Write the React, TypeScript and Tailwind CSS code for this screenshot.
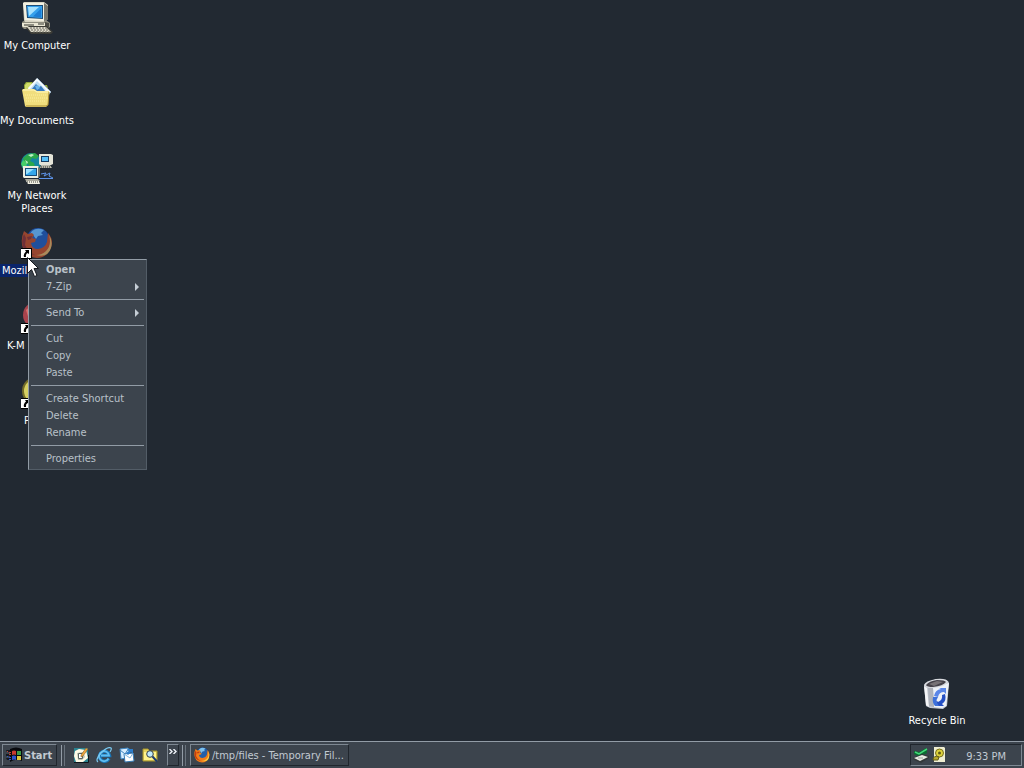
import type { ReactNode } from "react";

function ComputerIcon() {
  return (
    <svg viewBox="0 0 32 32" className="size-8 shrink-0" aria-hidden="true">
      <path d="M1 20l3-2h21l4 3v4l-3 2H3l-2-2z" fill="#8f8e80" />
      <path d="M1 21h23v4H2l-1-1z" fill="#e9e6d3" />
      <path d="M3 23h10M17 22h6" stroke="#33342f" />
      <path d="M24 20l4 1v4l-4 2z" fill="#4b4b44" />
      <path d="M2 1l1-1h20l4 3v14l-4 3H4l-1-2z" fill="#d8d5c4" />
      <path d="M23 1l4 3v13l-4 3z" fill="#77766b" />
      <path d="M2 1l21 0v18L4 18z" fill="#f3f1e2" />
      <path d="M5 3l17 0v14L6 16z" fill="#1b4c77" />
      <path d="M6 4l15 0v12L7 15z" fill="#35a0ec" />
      <path d="M7 5l11 0L8 14z" fill="#a5e1ff" />
      <path d="M12 14.500l8-8v9z" fill="#1c7dd4" />
      <path d="M5 26l3-2h18l6 6-2 2H10z" fill="#3c3c36" />
      <path d="M6 25h19l5 5H10z" fill="#dcd9ca" />
      <path d="M9 26h17M10 28h18M12 30h17" stroke="#6a695f" strokeDasharray="2 1" />
    </svg>
  );
}

function DocumentsIcon() {
  return (
    <svg viewBox="0 0 32 32" className="size-8 shrink-0" aria-hidden="true">
      <path d="M3 8l2-3h6l3 3h12l1 3v16H4z" fill="#94a83a" />
      <path d="M4 8l2-2h4l3 3v4H4z" fill="#cfdc68" />
      <path d="M7 11L16 1l14 14-3 4H9z" fill="#f7fbff" />
      <path d="M16 1l14 14-2 2" fill="none" stroke="#9fb5c9" />
      <path d="M9 12l7-8 9 9-3 3H12z" fill="#bcdcf3" />
      <path d="M11 12l4-5 3 3 2-1 4 5-4 2h-7z" fill="#3577bd" />
      <path d="M14 9l3-1 2 3-3 2z" fill="#6bb5ea" />
      <path d="M1 13l1-1h11l3 2h12l-1 14-2 2H5l-1-1z" fill="#f0de7d" />
      <path d="M2 13h11l3 2h11" fill="none" stroke="#fff8c0" />
      <path d="M28 15l-1 13-2 1H5" fill="none" stroke="#a98d32" />
      <path d="M4 18h22M5 21h21M5 24h20" stroke="#fbeea0" strokeDasharray="1 1" />
    </svg>
  );
}

function NetworkIcon() {
  return (
    <svg viewBox="0 0 32 32" className="size-8 shrink-0" aria-hidden="true">
      <circle cx="10" cy="11" r="10" fill="#1685a0" />
      <path d="M2 6l5-4 7-1 4 3-3 3-4-1-2 3 4 2 1 4-3 5-3-3v-4l-5-3z" fill="#2ca84a" />
      <path d="M2 8l4 3-1 6-3-1-2-4z" fill="#45cf68" />
      <path d="M7 3l4-1 2 1-3 2zM4 8l3 2-1 2z" fill="#c1f3c7" />
      <path d="M18 2h12l2 1v9l-2 1H19l-1-1z" fill="#e4e4d8" />
      <path d="M20 4h8v6h-8z" fill="#153b61" />
      <path d="M21 5h6v4h-6z" fill="#55bdf5" />
      <path d="M20 13h9l2 3H19z" fill="#bab9ac" />
      <path d="M20 15h10" stroke="#33352f" strokeDasharray="1 1" />
      <path d="M18 26.500h14M20 22l5-1-2 3 6-3-1 3 4 2" fill="none" stroke="#5d93e8" />
      <path d="M2 14h15l1 1v10l-1 1H3l-1-1z" fill="#efeee1" />
      <path d="M17 15l2 1v8l-2 2z" fill="#73736a" />
      <path d="M4 16h12v8H4z" fill="#154d7c" />
      <path d="M5 17h10v6H5z" fill="#36a7eb" />
      <path d="M5 17h8l-7 5H5z" fill="#9be1ff" />
      <path d="M4 27h13l2 2H5z" fill="#a8a79b" />
      <path d="M5 29h13l1 3H7z" fill="#f0eee2" />
      <path d="M6 30h12" stroke="#3e3f39" strokeDasharray="1 1" />
    </svg>
  );
}

function FoxGlobe({ className, dim = false }: { className: string; dim?: boolean }) {
  const c = dim
    ? { blue: "#204f9c", sky: "#5796d0", dark: "#162c63", fox: "#96452f", deep: "#6f3038", tail: "#a98a5c" }
    : { blue: "#245fa8", sky: "#7cc0ec", dark: "#173a7c", fox: "#f07c18", deep: "#c53c10", tail: "#ffc93c" };
  return (
    <svg viewBox="0 0 32 32" className={className} aria-hidden="true">
      <circle cx="17" cy="13" r="12" fill={c.dark} />
      <circle cx="17" cy="12" r="11" fill={c.blue} />
      <path d="M11 4q5-4 12-1l-3 3 2 2-5 1-2 3-3-4-3-1z" fill={c.sky} />
      <path d="M3 4l4 3 4-1 2 2-2 3 4 1-1 3-4 1q1 6 7 6 7-1 9-7l1-9q6 7 3 14-4 11-14 11Q5 30 2 21-1 13 3 4z" fill={c.fox} />
      <path d="M3 7l2 4-1 7q3 7 10 10-8-1-12-8-2-6 1-13z" fill={c.deep} />
      <path d="M28 8q3 10-3 16-4 4-10 4 12 3 15-7 2-7-2-13z" fill={c.tail} />
      <path d="M6 10l5-1-1 3-3 1z" fill={c.deep} />
    </svg>
  );
}

function ShortcutIcon({ children }: { children: ReactNode }) {
  return (
    <span className="relative block size-8 shrink-0">
      {children}
      <svg viewBox="0 0 11 11" className="absolute bottom-0 left-0 size-[11px]" aria-hidden="true">
        <path d="M0 0h11v11H0z" fill="#000" />
        <path d="M0 1h10v9H0z" fill="#fff" />
        <path d="M4 2h4v4L6.500 5Q4.500 6 5 9H3Q2 6 5 3.500z" fill="#000" />
      </svg>
    </span>
  );
}

function DinoIcon() {
  return (
    <svg viewBox="0 0 32 32" className="size-8" aria-hidden="true">
      <circle cx="15" cy="13" r="13" fill="#a8434d" />
      <path d="M5 8q9-9 18 0l-4 13-9 3z" fill="#d8716e" />
    </svg>
  );
}

function RingIcon() {
  return (
    <svg viewBox="0 0 32 32" className="size-8" aria-hidden="true">
      <circle cx="15" cy="14" r="13" fill="#d6cf62" stroke="#746d29" strokeWidth="2" />
      <circle cx="15" cy="14" r="8" fill="#74762f" />
    </svg>
  );
}

function RecycleIcon() {
  return (
    <svg viewBox="0 0 32 32" className="size-8 shrink-0" aria-hidden="true">
      <path d="M3 8l12-6 12 2 1 2-2 23-4 3-13-1-4-2z" fill="#c3c8d1" />
      <path d="M12 11l16-5-3 23-4 2-8-1z" fill="#eef2f8" />
      <path d="M3 9l3 2 2 19-3-2z" fill="#f5f5f7" />
      <path d="M7 11h5l1 19-5-1z" fill="#aeb2bb" />
      <path d="M3 8q1-4 12-6 11-1 12 3-3 5-15 6-8 0-9-3z" fill="#d8dadf" />
      <path d="M5 8q3-4 11-5 8 0 9 2-3 4-13 5-6 0-7-2z" fill="#45424a" />
      <path d="M8 7l8-3 6 1-9 4z" fill="#777276" />
      <path d="M13 19q1-6 7-7l-2-1h7v6l-2-2q-5 0-6 5z" fill="#5a86e8" />
      <path d="M24 17q2 7-3 10l2 2h-7l-1-6 2 2q5-2 4-7z" fill="#244fc4" />
      <path d="M12 20h5l-2 4 3 5h-4q-3-3-2-9z" fill="#3d70da" />
    </svg>
  );
}

function WindowsLogo() {
  return (
    <svg viewBox="0 0 16 16" className="size-4 shrink-0" aria-hidden="true">
      <path d="M4 2q6-3 12 0v12q-6-3-12 1z" fill="#080a0e" />
      <path d="M0 3h4v2H1zM0 7h4v2H0zM0 11h4v2H1z" fill="#161a20" />
      <path d="M6 4q2-1 4 0v4q-2-1-4 0z" fill="#c83a2f" />
      <path d="M11 4l4 0v4l-4 0z" fill="#38994a" />
      <path d="M6 9q2-1 4 0v4q-2-1-4 0z" fill="#2d52cc" />
      <path d="M11 9l4 0v4l-4 0z" fill="#dcc53c" />
      <path d="M1 4.500h1M3 5.500h2M3 7.500h2" stroke="#c83a2f" />
      <path d="M1 9.500h1M3 10.500h2M3 12.500h2" stroke="#2d52cc" />
    </svg>
  );
}

function ShowDesktopIcon() {
  return (
    <svg viewBox="0 0 16 16" className="size-4" aria-hidden="true">
      <path d="M1 1h14v14H1z" fill="#2a8390" />
      <path d="M2 4l4-2 7 1 2 8-5 4H3L1 9z" fill="#fffbe6" />
      <path d="M4 6l6-1 2 5-3 3H5z" fill="#bdc3b2" />
      <path d="M5.500 6.500h4v5h-4z" fill="#fff" stroke="#59645f" />
      <path d="M8 8l5-7 2 1-5 7-2 1z" fill="#efa83d" stroke="#735124" strokeWidth=".5" />
      <path d="M1 15.500h14.500V8" fill="none" stroke="#10151b" />
    </svg>
  );
}

function ExplorerIcon() {
  return (
    <svg viewBox="0 0 16 16" className="size-4" aria-hidden="true">
      <path d="M13 11.500A5 5 0 1 1 13.500 8.500H5" fill="none" stroke="#1876b8" strokeWidth="3.500" />
      <path d="M12.500 11.500A5 5 0 1 1 13 8.500H5" fill="none" stroke="#61bdf0" strokeWidth="1.800" />
      <path d="M2 15Q-1 13 5 6q7-7 10-5 1 1-1 4" fill="none" stroke="#7bc9f0" strokeWidth="1.200" />
    </svg>
  );
}

function MailIcon() {
  return (
    <svg viewBox="0 0 16 16" className="size-4" aria-hidden="true">
      <path d="M1 2l8-1 3 9-10 2z" fill="#d8eeff" stroke="#3f86c2" />
      <path d="M1 3l5 4 4-6" fill="none" stroke="#3b82bb" />
      <path d="M5 7l9-1 1 8-9 1z" fill="#fff" stroke="#367bb5" />
      <path d="M5 7l6 4 3-5" fill="none" stroke="#7fb6df" />
      <path d="M8 2h6v5l-2-2-3 3-2-2 3-2z" fill="#2c7dca" />
    </svg>
  );
}

function SearchFolderIcon() {
  return (
    <svg viewBox="0 0 16 16" className="size-4" aria-hidden="true">
      <path d="M1 2h5l2 2h7v10H1z" fill="#e8d55c" stroke="#a59531" />
      <path d="M2 5h12v8H2z" fill="#fff38c" />
      <circle cx="8" cy="7" r="3.300" fill="#bfe8fb" stroke="#333d46" />
      <path d="M10.500 9.500l4.500 5" stroke="#1c3a70" strokeWidth="2" />
    </svg>
  );
}

function DeviceIcon() {
  return (
    <svg viewBox="0 0 16 16" className="size-4" aria-hidden="true">
      <path d="M1 4l5 1 7-4 1 2v3l-7 4-6-3z" fill="#0d6b32" />
      <path d="M2 5l4 2 8-5" fill="none" stroke="#42d878" strokeWidth="1.500" />
      <path d="M0 11l9-4 7 2v2l-8 5-7-3z" fill="#33383a" />
      <path d="M1 11l8-3 6 2-8 4z" fill="#e9ebe4" />
      <path d="M5 11h5" stroke="#9a9f99" />
    </svg>
  );
}

function UpdateIcon() {
  return (
    <svg viewBox="0 0 16 16" className="size-4" aria-hidden="true">
      <path d="M3 0h10l1 1v14H3z" fill="#efeed2" />
      <circle cx="8.500" cy="6" r="4" fill="#ddd23c" stroke="#77701c" />
      <circle cx="8.500" cy="6" r="1.500" fill="#5f5917" />
      <path d="M2 13q0-5 6-3l-1 3z" fill="#b8aa2b" stroke="#625c19" />
    </svg>
  );
}

type DesktopItemProps = {
  icon: ReactNode;
  name: string;
  label?: string;
  labelClass?: string;
};

function DesktopItem({ icon, name, label = name, labelClass = "px-0.5" }: DesktopItemProps) {
  return (
    <button type="button" aria-label={name} className="flex h-[75px] w-[74px] flex-col items-center gap-[5px] pt-0.5 text-white">
      {icon}
      <span className={labelClass}>{label}</span>
    </button>
  );
}

function MenuItem({ label, bold = false, submenu = false }: { label: string; bold?: boolean; submenu?: boolean }) {
  return (
    <button
      type="button"
      role="menuitem"
      aria-haspopup={submenu ? "menu" : undefined}
      className="flex h-[17px] w-full items-center justify-between pr-[5px] pl-[15px] hover:bg-[#56616b]"
    >
      <span className={bold ? "font-bold" : ""}>{label}</span>
      {submenu && (
        <svg viewBox="0 0 4 8" className="h-2 w-1" aria-hidden="true">
          <path d="M0 0l4 4-4 4z" fill="#c5cdd5" />
        </svg>
      )}
    </button>
  );
}

function MenuLine() {
  return <div role="separator" className="my-1 h-px bg-[#929ca6]" />;
}

function Grip() {
  return (
    <div className="flex h-[21px] shrink-0 gap-0.5" aria-hidden="true">
      <span className="w-px bg-[#929ca6]" />
      <span className="w-px bg-[#69737d]" />
    </div>
  );
}

const launchers = [
  { name: "Show Desktop", icon: <ShowDesktopIcon /> },
  { name: "Internet Explorer", icon: <ExplorerIcon /> },
  { name: "Mail", icon: <MailIcon /> },
  { name: "Search", icon: <SearchFolderIcon /> },
];

export default function App() {
  return (
    <div className="flex min-h-screen flex-col bg-[#222932] font-['DejaVu_Sans_Condensed','DejaVu_Sans',sans-serif] text-[11px] leading-[13px]">
      <main className="relative flex-1 overflow-hidden">
        <div className="flex flex-col">
          <DesktopItem icon={<ComputerIcon />} name="My Computer" />
          <DesktopItem icon={<DocumentsIcon />} name="My Documents" labelClass="whitespace-nowrap" />
          <DesktopItem icon={<NetworkIcon />} name="My Network Places" />
          <DesktopItem
            icon={<ShortcutIcon><FoxGlobe className="size-8" dim /></ShortcutIcon>}
            name="Mozilla Firefox"
            label="Mozil"
            labelClass="w-7 self-start bg-[#0a246a] pl-0.5 text-left"
          />
          <DesktopItem
            icon={<ShortcutIcon><DinoIcon /></ShortcutIcon>}
            name="K-Meleon"
            label="K-M"
            labelClass="w-7 self-start overflow-hidden pl-[7px] text-left"
          />
          <DesktopItem
            icon={<ShortcutIcon><RingIcon /></ShortcutIcon>}
            name="P"
            labelClass="w-7 self-start overflow-hidden pl-6 text-left"
          />
        </div>

        <div className="absolute right-[50px] bottom-[-9px]">
          <DesktopItem icon={<RecycleIcon />} name="Recycle Bin" />
        </div>

        <div
          role="menu"
          className="absolute top-[259px] left-7 w-[119px] border border-t-[#929ca6] border-r-[#535d67] border-b-[#535d67] border-l-[#929ca6] bg-[#3c444d] px-0.5 pt-px pb-0.5 text-[#b9c1c9]"
        >
          <MenuItem label="Open" bold />
          <MenuItem label="7-Zip" submenu />
          <MenuLine />
          <MenuItem label="Send To" submenu />
          <MenuLine />
          <MenuItem label="Cut" />
          <MenuItem label="Copy" />
          <MenuItem label="Paste" />
          <MenuLine />
          <MenuItem label="Create Shortcut" />
          <MenuItem label="Delete" />
          <MenuItem label="Rename" />
          <MenuLine />
          <MenuItem label="Properties" />
        </div>

        <svg viewBox="0 0 12 21" className="absolute top-[257px] left-[27px] h-[21px] w-3" aria-hidden="true">
          <path d="M.5 .5v16l4-4 3 7 2.500-1-3-7H11.500z" fill="#fff" stroke="#15191f" />
        </svg>
      </main>

      <footer className="flex h-[27px] shrink-0 items-center border-t border-[#929ca6] bg-[#3c444d] px-0.5 text-[#c2cad2]">
        <button
          type="button"
          className="flex h-[22px] w-[55px] shrink-0 items-center gap-0.5 border border-t-[#7e8892] border-r-[#20262d] border-b-[#20262d] border-l-[#7e8892] pl-[3px] font-bold"
        >
          <WindowsLogo />
          Start
        </button>
        <div className="ml-1 flex items-center">
          <Grip />
          <div className="ml-2 flex w-[94px] gap-[7px]">
            {launchers.map((l) => (
              <button key={l.name} type="button" aria-label={l.name}>
                {l.icon}
              </button>
            ))}
          </div>
          <button
            type="button"
            aria-label="More programs"
            className="flex h-[22px] w-3 justify-center border border-t-[#7e8892] border-r-[#20262d] border-b-[#20262d] border-l-[#7e8892] pt-1"
          >
            <svg viewBox="0 0 8 5" className="h-[5px] w-2" aria-hidden="true">
              <path d="M.5 0L3 2.500.5 5M4.500 0L7 2.500 4.500 5" fill="none" stroke="#eef3f8" strokeWidth="1.400" />
            </svg>
          </button>
        </div>
        <div className="ml-[3px] flex min-w-0 flex-1 items-center">
          <Grip />
          <button
            type="button"
            className="ml-1 flex h-[22px] w-[159px] items-center gap-0.5 border border-t-[#7e8892] border-r-[#20262d] border-b-[#20262d] border-l-[#7e8892] pl-[3px] whitespace-nowrap"
          >
            <FoxGlobe className="size-4 shrink-0" />
            /tmp/files - Temporary Fil...
          </button>
        </div>
        <div className="flex h-[22px] w-[112px] shrink-0 items-center border border-t-[#20262d] border-r-[#7e8892] border-b-[#7e8892] border-l-[#20262d] pr-[15px] pl-0.5">
          <DeviceIcon />
          <span className="ml-0.5">
            <UpdateIcon />
          </span>
          <time className="ml-auto pt-0.5">9:33 PM</time>
        </div>
      </footer>
    </div>
  );
}
